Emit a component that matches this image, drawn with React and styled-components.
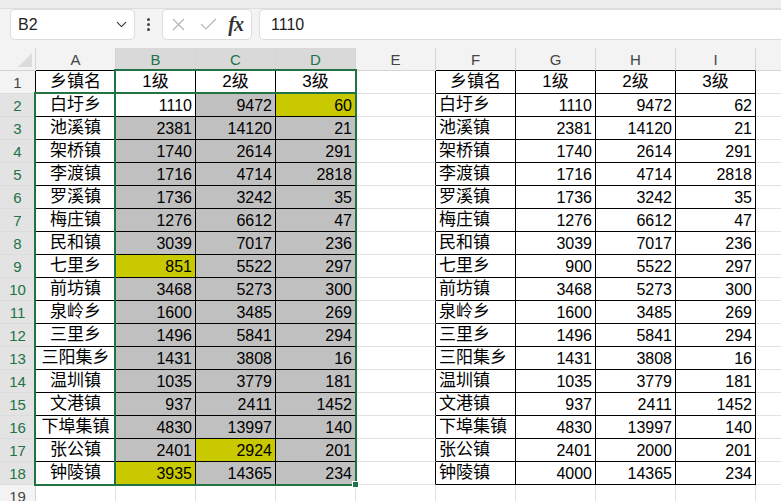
import React from 'react';
import styled, { createGlobalStyle } from 'styled-components';
import { ChevronDown, X, Check } from 'lucide-react';

const GlobalStyle = createGlobalStyle`
    html, body {
        margin: 0;
        padding: 0;
        background: #ffffff;
        overflow: hidden;
    }
    * {
        box-sizing: border-box;
    }
`;

const GREEN = '#217346';
const COLS = ['A', 'B', 'C', 'D', 'E', 'F', 'G', 'H', 'I', 'J'];
const LEFT = ['A', 'B', 'C', 'D'];
const RIGHT = ['F', 'G', 'H', 'I'];
const SELECTED = ['B', 'C', 'D'];

const leftData = [
    ['白圩乡', 1110, 9472, 60],
    ['池溪镇', 2381, 14120, 21],
    ['架桥镇', 1740, 2614, 291],
    ['李渡镇', 1716, 4714, 2818],
    ['罗溪镇', 1736, 3242, 35],
    ['梅庄镇', 1276, 6612, 47],
    ['民和镇', 3039, 7017, 236],
    ['七里乡', 851, 5522, 297],
    ['前坊镇', 3468, 5273, 300],
    ['泉岭乡', 1600, 3485, 269],
    ['三里乡', 1496, 5841, 294],
    ['三阳集乡', 1431, 3808, 16],
    ['温圳镇', 1035, 3779, 181],
    ['文港镇', 937, 2411, 1452],
    ['下埠集镇', 4830, 13997, 140],
    ['张公镇', 2401, 2924, 201],
    ['钟陵镇', 3935, 14365, 234],
];

const rightData = leftData.map((row) => [...row]);
rightData[0][3] = 62;
rightData[7][1] = 900;
rightData[15][2] = 2000;
rightData[16][1] = 4000;

// yellow cells in the left table, as "col-row"
const yellow = ['D-2', 'B-9', 'C-17', 'B-18'];

const Page = styled.div`
    width: 781px;
    height: 501px;
    overflow: hidden;
    font-family: "Liberation Sans", "Noto Sans CJK SC", sans-serif;
    background: #ffffff;
`;

const RibbonEdge = styled.div`
    height: 9px;
    background: #ededed;
    border-bottom: 1px solid #dedede;
`;

const FormulaBar = styled.div`
    height: 39px;
    background: #f3f3f3;
    display: flex;
    align-items: flex-start;
    padding: 0 0 0 10px;
`;

const Box = styled.div`
    height: 31px;
    background: #ffffff;
    border: 1px solid #dcdcdc;
    border-radius: 5px;
    display: flex;
    align-items: center;
`;

const NameBox = styled(Box)`
    width: 125px;
    padding: 0 4px 0 7px;
    justify-content: space-between;
    font-size: 16px;
    color: #222;
`;

const Dots = styled.div`
    width: 27px;
    height: 31px;
    display: flex;
    flex-direction: column;
    align-items: center;
    justify-content: center;
    gap: 2px;

    span {
        width: 3px;
        height: 3px;
        border-radius: 50%;
        background: #444;
    }
`;

const ButtonGroup = styled(Box)`
    width: 90px;
    padding: 0 6px 0 5px;
    justify-content: space-between;
    color: #b4b4b4;
`;

const Fx = styled.span`
    font-family: "Liberation Serif", "DejaVu Serif", serif;
    font-style: italic;
    font-weight: bold;
    font-size: 20px;
    color: #333;
    letter-spacing: -1px;
    margin-right: 2px;
`;

const FormulaInput = styled(Box)`
    flex: 1;
    margin-left: 7px;
    border-right: none;
    border-radius: 5px 0 0 5px;
    padding-left: 11px;
    font-size: 16px;
    color: #222;
`;

const GridWrap = styled.div`
    position: relative;
`;

const Grid = styled.div`
    display: grid;
    grid-template-columns: 36px repeat(10, 80px);
    grid-auto-rows: 23px;
`;

const Corner = styled.div`
    background: #f3f3f3;
    border-right: 1px solid #d4d4d4;
    border-bottom: 1px solid #d4d4d4;
    position: relative;

    &::after {
        content: '';
        position: absolute;
        right: 3px;
        bottom: 3px;
        border-left: 14px solid transparent;
        border-bottom: 14px solid #dcdcdc;
    }
`;

const ColHead = styled.div`
    display: flex;
    align-items: center;
    justify-content: center;
    font-size: 15px;
    color: ${(p) => (p.$selected ? GREEN : '#444')};
    background: ${(p) => (p.$selected ? '#d9d9d9' : '#f3f3f3')};
    border-right: 1px solid #d4d4d4;
    border-bottom: 1px solid ${(p) => (p.$selected ? GREEN : p.$table ? '#000' : '#d4d4d4')};
`;

const RowHead = styled.div`
    display: flex;
    align-items: center;
    justify-content: center;
    font-size: 15px;
    color: ${(p) => (p.$selected ? GREEN : '#444')};
    background: ${(p) => (p.$selected ? '#e3e3e3' : '#f3f3f3')};
    border-right: 1px solid ${(p) => (p.$table ? '#000' : '#d4d4d4')};
    border-bottom: 1px solid #dcdcdc;
`;

const Cell = styled.div`
    display: flex;
    align-items: center;
    justify-content: ${(p) => p.$align};
    padding: ${(p) => (p.$num ? '1px 3px 0' : '0 3px')};
    font-size: ${(p) => (p.$num ? '16px' : '17px')};
    line-height: 22px;
    color: #000;
    white-space: nowrap;
    overflow: hidden;
    background: ${(p) => p.$fill};
    border-right: 1px solid ${(p) => (p.$blackRight ? '#000' : '#e1e1e1')};
    border-bottom: 1px solid ${(p) => (p.$blackBottom ? '#000' : '#e1e1e1')};
`;

const SelectionBox = styled.div`
    position: absolute;
    border: 2px solid ${GREEN};
    pointer-events: none;
`;

const FillHandle = styled.div`
    position: absolute;
    width: 7px;
    height: 7px;
    background: ${GREEN};
    border: 1px solid #ffffff;
`;

const cellValue = (col, row) => {
    const data = LEFT.includes(col) ? leftData : rightData;
    const idx = LEFT.includes(col) ? LEFT.indexOf(col) : RIGHT.indexOf(col);
    if (row === 1) return ['乡镇名', '1级', '2级', '3级'][idx];
    return data[row - 2][idx];
};

const renderCell = (col, row) => {
    const inTable = row <= 18 && (LEFT.includes(col) || RIGHT.includes(col));
    const blackRight = inTable || (col === 'E' && row <= 18);
    let value = '';
    let align = 'flex-end';
    let num = false;
    let fill = '#ffffff';

    if (inTable) {
        value = cellValue(col, row);
        num = typeof value === 'number';
        if (row === 1 || col === 'A') align = 'center';
        else if (col === 'F') align = 'flex-start';
        if (SELECTED.includes(col) && row >= 2 && !(col === 'B' && row === 2)) {
            fill = yellow.includes(`${col}-${row}`) ? '#c9c900' : '#c0c0c0';
        }
    }

    return (
        <Cell
            key={`${col}${row}`}
            $align={align}
            $num={num}
            $fill={fill}
            $blackRight={blackRight}
            $blackBottom={inTable}
        >
            {value}
        </Cell>
    );
};

const rows = Array.from({ length: 19 }, (_, i) => i + 1);

const App = () => {
    return (
        <Page>
            <GlobalStyle />
            <RibbonEdge />
            <FormulaBar>
                <NameBox>
                    B2
                    <ChevronDown size={17} strokeWidth={1.5} color="#333" />
                </NameBox>
                <Dots>
                    <span />
                    <span />
                    <span />
                </Dots>
                <ButtonGroup>
                    <X size={21} strokeWidth={1.3} />
                    <Check size={21} strokeWidth={1.3} />
                    <Fx>fx</Fx>
                </ButtonGroup>
                <FormulaInput>1110</FormulaInput>
            </FormulaBar>
            <GridWrap>
                <Grid>
                    <Corner />
                    {COLS.map((c) => (
                        <ColHead
                            key={c}
                            $selected={SELECTED.includes(c)}
                            $table={LEFT.includes(c) || RIGHT.includes(c)}
                        >
                            {c === 'J' ? '' : c}
                        </ColHead>
                    ))}
                    {rows.map((r) => (
                        <React.Fragment key={r}>
                            <RowHead $selected={r >= 2 && r <= 18} $table={r <= 18}>
                                {r}
                            </RowHead>
                            {COLS.map((c) => renderCell(c, r))}
                        </React.Fragment>
                    ))}
                </Grid>
                <SelectionBox style={{ left: 34, top: 44, width: 323, height: 394 }} />
                <SelectionBox style={{ left: 114, top: 21, width: 243, height: 417 }} />
                <FillHandle style={{ left: 352, top: 433 }} />
            </GridWrap>
        </Page>
    );
};

export default App;
